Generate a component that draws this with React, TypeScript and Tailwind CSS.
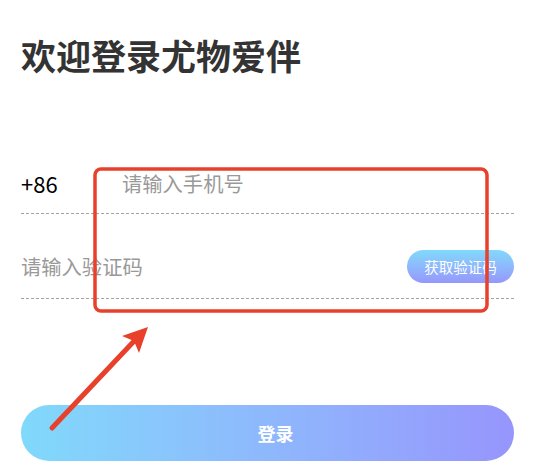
import React from 'react';

const FONT = { fontFamily: '"Noto Sans CJK SC", "Noto Sans", sans-serif' };

function Dashed() {
  return <div className="h-px w-full bg-[linear-gradient(to_right,#a3a3a3_3px,transparent_3px)] bg-[length:5px_1px]" />;
}

function Annotation() {
  return (
    <svg className="pointer-events-none absolute left-0 top-0" width="535" height="470" viewBox="0 0 535 470">
      <rect x="95" y="169" width="392" height="142" rx="6" fill="none" stroke="#e8402a" strokeWidth="3.5" />
      <line x1="52" y1="428" x2="137" y2="338" stroke="#e8402a" strokeWidth="5" strokeLinecap="round" />
      <polygon points="148,327 122,336 134,341 139,353" fill="#e8402a" />
    </svg>
  );
}

export default function App() {
  return (
    <div className="relative h-[470px] w-[535px] overflow-hidden bg-white" style={FONT}>
      <div className="px-[21px] pt-[31px]">
        <h1 className="text-[35px] font-bold leading-[48px] text-[#333]">欢迎登录尤物爱伴</h1>

        <div className="mt-[74px] flex h-[60px] items-center">
          <span className="w-[101px] text-[22px] text-black">+86</span>
          <span className="text-[20.3px] text-[#999]">请输入手机号</span>
        </div>
        <Dashed />

        <div className="mt-[21px] flex h-[63px] items-center justify-between">
          <span className="text-[20.3px] text-[#999]">请输入验证码</span>
          <button className="flex h-[33px] w-[107px] items-center justify-center rounded-full bg-gradient-to-b from-[#80d9fb] to-[#9597fb] text-[14.5px] text-white">
            获取验证码
          </button>
        </div>
        <Dashed />

        <button className="mt-[106px] flex h-[56px] w-full items-center justify-center rounded-full bg-gradient-to-r from-[#80d9fb] to-[#9695fc] pl-4 text-[18px] font-bold text-white">
          登录
        </button>
      </div>
      <Annotation />
    </div>
  );
}
